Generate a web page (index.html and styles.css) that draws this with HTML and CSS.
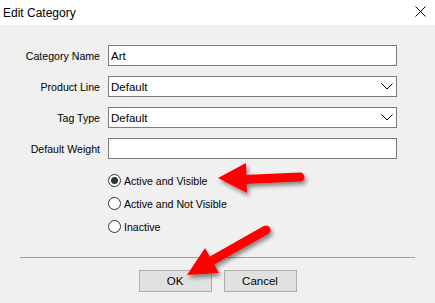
FILE: index.html
```html
<!DOCTYPE html>
<html lang="en">
<head>
  <meta charset="UTF-8" />
  <meta name="viewport" content="width=device-width, initial-scale=1.0" />
  <title>Edit Category</title>
  <link rel="stylesheet" href="styles.css">
</head>
<body>
  <div class="titlebar">
    <span class="title">Edit Category</span>
    <svg class="close" width="11" height="11" viewBox="0 0 11 11">
      <path d="M0.5 0.5 L10.5 10.5 M10.5 0.5 L0.5 10.5" stroke="#000" stroke-width="1" fill="none" />
    </svg>
  </div>

  <div class="content">
    <div class="form">
      <label>Category Name</label>
      <div class="field">Art</div>

      <label>Product Line</label>
      <div class="field select">
        <span>Default</span>
        <svg width="12" height="7" viewBox="0 0 12 7"><polyline points="0.5,0.5 6,6 11.5,0.5" stroke="#000" fill="none" /></svg>
      </div>

      <label>Tag Type</label>
      <div class="field select">
        <span>Default</span>
        <svg width="12" height="7" viewBox="0 0 12 7"><polyline points="0.5,0.5 6,6 11.5,0.5" stroke="#000" fill="none" /></svg>
      </div>

      <label>Default Weight</label>
      <div class="field"></div>
    </div>

    <div class="radios">
      <div class="radio"><span class="dot checked"></span>Active and Visible</div>
      <div class="radio"><span class="dot"></span>Active and Not Visible</div>
      <div class="radio"><span class="dot"></span>Inactive</div>
    </div>

    <hr class="separator">

    <div class="buttons">
      <button>OK</button>
      <button>Cancel</button>
    </div>
  </div>

  <!-- annotation arrows drawn over the dialog -->
  <svg class="arrows" width="435" height="303" viewBox="0 0 435 303">
    <defs>
      <filter id="shadow" x="-20%" y="-20%" width="140%" height="140%">
        <feDropShadow dx="2" dy="3" stdDeviation="2" flood-color="#000" flood-opacity="0.45" />
      </filter>
    </defs>
    <g filter="url(#shadow)" fill="#f00" stroke="#f00">
      <line x1="244" y1="179.5" x2="300" y2="177" stroke-width="9" stroke-linecap="round" />
      <polygon points="218,178 246,163 247,193" stroke="none" />
      <line x1="213" y1="260" x2="266" y2="230" stroke-width="9" stroke-linecap="round" />
      <polygon points="187,275 205,248 219,273" stroke="none" />
    </g>
  </svg>
</body>
</html>
```

FILE: styles.css
```css
body {
  margin: 0;
  width: 435px;
  height: 303px;
  overflow: hidden;
  background: #f0f0f0;
  font-family: "Liberation Sans", Arial, sans-serif;
  font-size: 10.6px;
  color: #000;
  position: relative;
}

.titlebar {
  height: 25px;
  background: #fff;
  display: flex;
  align-items: center;
  justify-content: space-between;
  padding: 0 9px 0 3px;
}

.title {
  font-size: 12px;
}

.close {
  margin-top: -2px;
}

.content {
  padding-top: 20px;
}

.form {
  display: grid;
  grid-template-columns: 100px 289px;
  column-gap: 8px;
  row-gap: 10px;
}

.form label {
  text-align: right;
  align-self: center;
}

.field {
  box-sizing: border-box;
  height: 21px;
  background: #fff;
  border: 1px solid #7a7a7a;
  padding: 0 2px;
  display: flex;
  align-items: center;
  font-size: 11.5px;
}

.select {
  justify-content: space-between;
  padding-right: 3px;
}

.radios {
  margin: 10px 0 0 108px;
}

.radio {
  height: 23px;
  display: flex;
  align-items: center;
}

.dot {
  box-sizing: border-box;
  width: 13px;
  height: 13px;
  border: 1px solid #333;
  border-radius: 50%;
  background: #fff;
  margin-right: 3px;
  display: flex;
  align-items: center;
  justify-content: center;
}

.dot.checked::after {
  content: "";
  width: 7px;
  height: 7px;
  border-radius: 50%;
  background: #333;
}

.separator {
  margin: 19px 20px 0;
  border: none;
  border-top: 1px solid #a0a0a0;
  height: 0;
}

.buttons {
  display: flex;
  justify-content: center;
  gap: 12px;
  margin-top: 12px;
}

.buttons button {
  width: 73px;
  height: 22px;
  background: #e1e1e1;
  border: 1px solid #adadad;
  font-family: inherit;
  font-size: 11.5px;
  color: #000;
  padding: 0;
}

.arrows {
  position: absolute;
  top: 0;
  left: 0;
  pointer-events: none;
}
```
